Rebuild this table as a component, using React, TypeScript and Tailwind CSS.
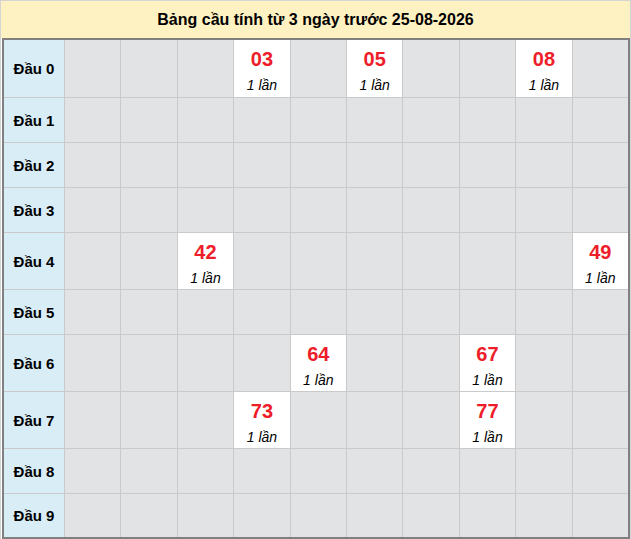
import React from 'react';

const hits: Record<number, number[]> = {
    0: [3, 5, 8],
    4: [2, 9],
    6: [4, 7],
    7: [3, 7],
};

const rowHeight = (d: number, tall: boolean) => {
    if (d === 0) return 'h-[57px]';
    if (d === 9) return 'h-[43px]';
    return tall ? 'h-[56px]' : 'h-[44px]';
};

const App: React.FC = () => {
    const rows = [0, 1, 2, 3, 4, 5, 6, 7, 8, 9];
    const cols = [0, 1, 2, 3, 4, 5, 6, 7, 8, 9];

    return (
        <div className="w-[631px] h-[539px] border-x border-t border-[#d4d4d4] bg-white font-['Liberation_Sans',Arial,sans-serif] text-black">
            {/* Title */}
            <div className="h-[37px] bg-[#fff2c2] flex items-center justify-center text-[16px] font-bold">
                Bảng cầu tính từ 3 ngày trước 25-08-2026
            </div>

            {/* Table */}
            <div className="ml-[1px] border-2 border-[#808080] bg-[#cacaca] grid grid-cols-[60px_repeat(10,minmax(0,1fr))] gap-px">
                {rows.map((d) => {
                    const filled = hits[d] || [];
                    const h = rowHeight(d, filled.length > 0);
                    return (
                        <React.Fragment key={d}>
                            <div className={`${h} bg-[#d9edf7] flex items-center justify-center pt-[2px] text-[15px] font-bold`}>
                                Đầu {d}
                            </div>
                            {cols.map((c) => {
                                const on = filled.includes(c);
                                return (
                                    <div
                                        key={c}
                                        className={`${h} ${on ? 'bg-white' : 'bg-[#e2e3e5]'} flex flex-col items-center pt-[9px]`}
                                    >
                                        {on && (
                                            <>
                                                <span className="text-[20px] leading-[20px] font-bold text-[#ee1d29]">
                                                    {d}{c}
                                                </span>
                                                <span className="mt-[8px] text-[14px] leading-[16px] italic">1 lần</span>
                                            </>
                                        )}
                                    </div>
                                );
                            })}
                        </React.Fragment>
                    );
                })}
            </div>
        </div>
    );
};

export default App;
